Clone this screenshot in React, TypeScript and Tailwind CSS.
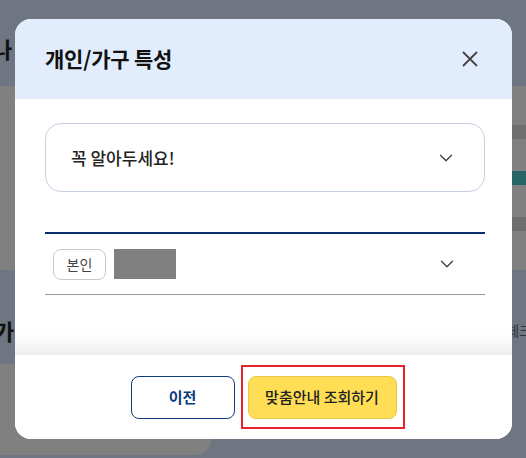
import React from "react";

const Chevron = () => (
  <svg width="14" height="8" viewBox="0 0 14 8" fill="none">
    <path d="M1.5 1.2l5.5 5.5 5.5-5.5" stroke="#444" strokeWidth="1.4" strokeLinecap="round" strokeLinejoin="round" />
  </svg>
);

export default function App() {
  return (
    <div
      className="relative w-[526px] h-[458px] overflow-hidden bg-[#6f7581]"
      style={{ fontFamily: '"Noto Sans CJK KR", "Noto Sans", sans-serif' }}
    >
      {/* backdrop page */}
      <div className="flex flex-col h-full">
        <div className="h-[86px] flex items-center pt-[10px]">
          <span className="-ml-[8px] text-[22px] font-bold text-[#111] leading-none">나</span>
        </div>
        <div className="h-[184px] bg-[#808080] flex flex-col items-end">
          <div className="mt-[39px] h-[14px] w-[20px] bg-[#6f6f6f]" />
          <div className="mt-[32px] h-[14px] w-[20px] bg-[#276466]" />
          <div className="mt-[32px] h-[14px] w-[20px] bg-[#6f6f6f]" />
        </div>
        <div className="flex-1 flex flex-col">
          <div className="h-[94px] pt-[26px] flex items-center justify-between">
            <span className="-ml-[6px] text-[22px] font-bold text-[#111] leading-none">가</span>
            <span className="-mr-[6px] text-[14px] text-[#333] leading-none">체크</span>
          </div>
          <div className="w-[211px] h-[91px] bg-[#808080] rounded-tr-[16px] rounded-br-[16px]" />
        </div>
      </div>

      {/* modal */}
      <div className="absolute left-[15px] top-[19px] w-[497px] h-[420px] rounded-[16px] overflow-hidden bg-white flex flex-col">
        <div className="h-[80px] shrink-0 bg-[#e1ecfd] pl-[30px] pr-[33px] flex items-center justify-between">
          <h2 className="text-[21px] font-bold text-[#111] tracking-[-0.2px]">개인/가구 특성</h2>
          <svg width="18" height="18" viewBox="0 0 18 18" fill="none">
            <path d="M2 2l14 14M16 2L2 16" stroke="#444" strokeWidth="1.8" />
          </svg>
        </div>

        <div className="flex-1 flex flex-col pl-[30px] pr-[27px] pt-[24px]">
          <div className="h-[69px] shrink-0 rounded-[16px] border border-[#c7d0e0] flex items-center justify-between pl-[25px] pr-[31px]">
            <span className="text-[17px] font-medium text-[#222]">꼭 알아두세요!</span>
            <Chevron />
          </div>

          <div className="mt-[40px] h-[2px] bg-[#0b2f6e]" />
          <div className="h-[61px] border-b border-[#999] flex items-center justify-between pl-[8px] pr-[31px]">
            <div className="flex items-center gap-[8px]">
              <span className="h-[31px] w-[53px] rounded-[8px] border border-[#c8c8c8] flex items-center justify-center text-[14px] text-[#444]">
                본인
              </span>
              <span className="h-[30px] w-[62px] bg-[#808080]" />
            </div>
            <Chevron />
          </div>
          <div className="flex-1" />
        </div>
        <div className="h-[22px] -mt-[22px] shrink-0 bg-gradient-to-b from-white to-[#eeeeee] relative" />

        <div className="h-[84px] shrink-0 bg-white flex items-start justify-center gap-[13px] pt-[21px]">
          <button className="h-[43px] w-[104px] rounded-[8px] border border-[#123c7c] bg-white text-[15px] font-bold text-[#0b3a80]">
            이전
          </button>
          <div className="relative">
            <div className="absolute -left-[7px] -right-[8px] -top-[11px] -bottom-[10px] border-2 border-[#e8212a]" />
            <button className="block h-[43px] w-[149px] rounded-[8px] border border-[#e6c84a] bg-[#ffde55] text-[15px] font-medium text-[#222]">
              맞춤안내 조회하기
            </button>
          </div>
        </div>
      </div>
    </div>
  );
}
